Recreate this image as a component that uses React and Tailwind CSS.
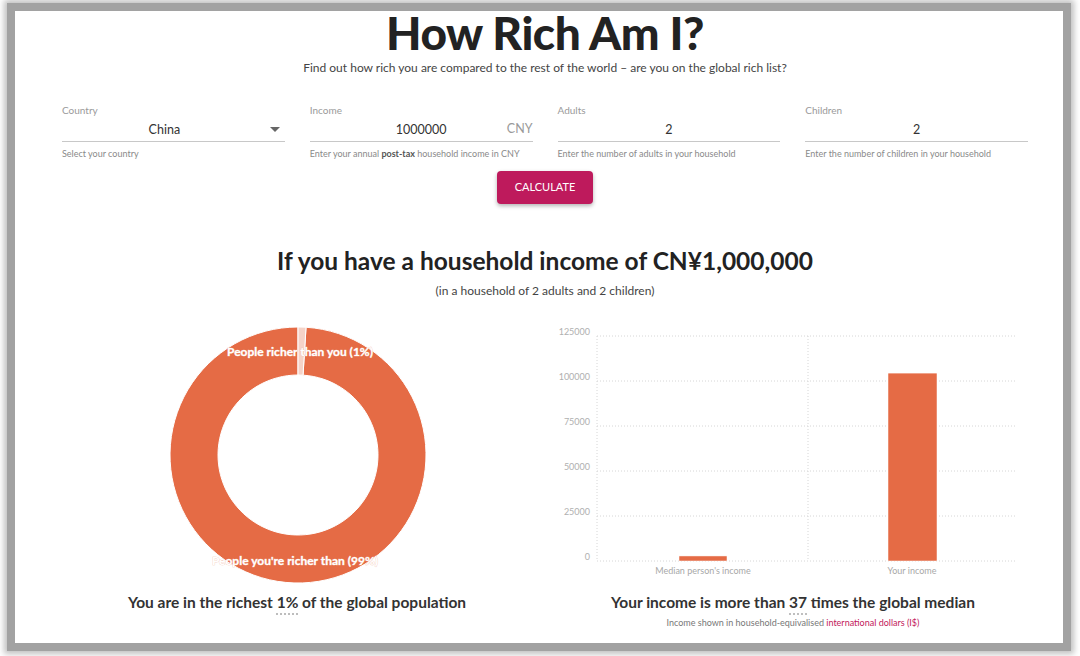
import React from "react";

const ORANGE = "#e56b45";
const LIGHT = "#f5d3c8";

function arc(cx, cy, r0, r1, a0, a1) {
  const p = (r, a) => {
    const t = ((a - 90) * Math.PI) / 180;
    return [cx + r * Math.cos(t), cy + r * Math.sin(t)];
  };
  const large = a1 - a0 > 180 ? 1 : 0;
  const [x0, y0] = p(r1, a0);
  const [x1, y1] = p(r1, a1);
  const [x2, y2] = p(r0, a1);
  const [x3, y3] = p(r0, a0);
  return `M${x0},${y0} A${r1},${r1} 0 ${large} 1 ${x1},${y1} L${x2},${y2} A${r0},${r0} 0 ${large} 0 ${x3},${y3} Z`;
}

function Field({ label, value, suffix, caret, help }) {
  return (
    <div className="flex flex-col">
      <span className="text-[10px] text-[#9a9a9a] leading-none">{label}</span>
      <div className={`relative mt-[7px] h-[20px] border-b border-[#c8c8c8] flex items-center justify-center ${caret ? "pr-[18px]" : ""}`}>
        <span className="text-[12.5px] text-[#333] leading-none -mt-[3px]">{value}</span>
        {suffix && (
          <span className="absolute right-0 top-[1px] text-[12.5px] text-[#9a9a9a] leading-none">{suffix}</span>
        )}
        {caret && (
          <span className="absolute right-[5px] top-[5px] w-0 h-0 border-l-[5px] border-r-[5px] border-t-[5px] border-l-transparent border-r-transparent border-t-[#666]" />
        )}
      </div>
      <span className="mt-[7px] text-[9px] text-[#8a8a8a] leading-none">{help}</span>
    </div>
  );
}

function Donut() {
  const cx = 249, cy = 130;
  return (
    <svg width="496" height="262" className="block">
      <path d={arc(cx, cy, 80, 128, 3.6, 360)} fill={ORANGE} stroke="#fff" strokeWidth="1" />
      <path d={arc(cx, cy, 80, 128, 0, 3.6)} fill={LIGHT} stroke="#fff" strokeWidth="1" />
      <text x="251" y="31" textAnchor="middle" fontSize="12" fontWeight="700" fill="#fff" stroke="#f3c7b8" strokeWidth="0.6" paintOrder="stroke">People richer than you (1%)</text>
      <text x="246" y="240" textAnchor="middle" fontSize="12" fontWeight="700" fill="#fff" stroke="#f3c7b8" strokeWidth="0.6" paintOrder="stroke">People you're richer than (99%)</text>
    </svg>
  );
}

function Bars() {
  const ticks = [125000, 100000, 75000, 50000, 25000, 0];
  const yOf = (v) => 236 - (v / 125000) * 225;
  return (
    <svg width="496" height="262" className="block">
      {ticks.map((t) => (
        <g key={t}>
          <line x1="52" x2="472" y1={yOf(t)} y2={yOf(t)} stroke="#d6d6d6" strokeDasharray="1 2" />
          <text x="45" y={yOf(t) - 1} textAnchor="end" fontSize="9" fill="#b0b0b0">{t}</text>
        </g>
      ))}
      <line x1="52" x2="52" y1="11" y2="236" stroke="#d6d6d6" strokeDasharray="1 2" />
      <line x1="263" x2="263" y1="11" y2="236" stroke="#d6d6d6" strokeDasharray="1 2" />
      <rect x="134" y={yOf(2800)} width="48" height={236 - yOf(2800)} fill={ORANGE} stroke="#fff" strokeWidth="0.5" />
      <rect x="343" y={yOf(104400)} width="49" height={236 - yOf(104400)} fill={ORANGE} stroke="#fff" strokeWidth="0.5" />
      <text x="158" y="249" textAnchor="middle" fontSize="9" fill="#a8a8a8">Median person's income</text>
      <text x="367" y="249" textAnchor="middle" fontSize="9" fill="#a8a8a8">Your income</text>
    </svg>
  );
}

export default function App() {
  return (
    <div className="w-[1080px] h-[656px] bg-white pl-[7px] pt-[3px]" style={{ fontFamily: "Lato, 'Noto Sans', sans-serif" }}>
      <div className="w-[1064px] h-[648px] border-[8px] border-[#a2a2a2] shadow-[0_0_6px_3px_rgba(0,0,0,0.25)] bg-white overflow-hidden">
        <div className="w-[992px] ml-[34px] flex flex-col items-center">
          <h1 className="-mt-[1px] text-[46px] font-black leading-none tracking-[-0.5px] text-[#222]">How Rich Am I?</h1>
          <p className="mt-[6px] text-[12px] text-[#444] leading-none">
            Find out how rich you are compared to the rest of the world – are you on the global rich list?
          </p>

          <div className="mt-[31px] w-full px-[13px] grid grid-cols-4 gap-[25px]">
            <Field label="Country" value="China" caret help="Select your country" />
            <Field
              label="Income"
              value="1000000"
              suffix="CNY"
              help={<>Enter your annual <b className="text-[#555]">post-tax</b> household income in CNY</>}
            />
            <Field label="Adults" value="2" help="Enter the number of adults in your household" />
            <Field label="Children" value="2" help="Enter the number of children in your household" />
          </div>

          <button className="mt-[13px] w-[96px] h-[33px] rounded-[4px] bg-[#be1a5c] text-white text-[11px] shadow-[0_2px_4px_rgba(0,0,0,0.3)]">
            CALCULATE
          </button>

          <h2 className="mt-[45px] text-[24.5px] font-bold leading-none text-[#222]">
            If you have a household income of CN¥1,000,000
          </h2>
          <p className="mt-[11px] text-[12px] text-[#444] leading-none">(in a household of 2 adults and 2 children)</p>

          <div className="mt-[28px] w-full grid grid-cols-2">
            <div className="flex flex-col items-center">
              <Donut />
              <p className="mt-[8px] text-[15.5px] font-bold text-[#333] leading-none">
                You are in the richest{" "}
                <span className="underline decoration-dotted decoration-[#aaa] underline-offset-[6px]">1%</span> of the global
                population
              </p>
            </div>
            <div className="flex flex-col items-center">
              <Bars />
              <p className="mt-[8px] text-[15.5px] font-bold text-[#333] leading-none">
                Your income is more than{" "}
                <span className="underline decoration-dotted decoration-[#aaa] underline-offset-[6px]">37</span> times the global
                median
              </p>
              <p className="mt-[8px] text-[9px] text-[#777] leading-none">
                Income shown in household-equivalised <span className="text-[#c2185b]">international dollars (I$)</span>
              </p>
            </div>
          </div>
        </div>
      </div>
    </div>
  );
}
